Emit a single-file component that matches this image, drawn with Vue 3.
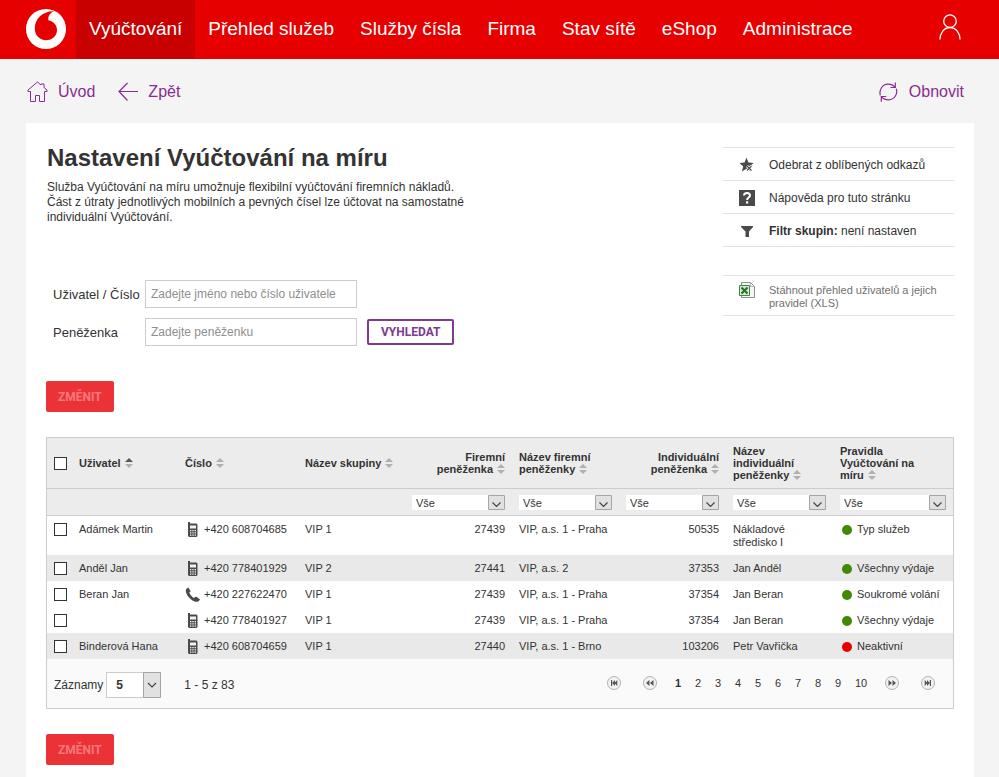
<script setup>
import { ref } from 'vue'

const nav = ['Vyúčtování', 'Přehled služeb', 'Služby čísla', 'Firma', 'Stav sítě', 'eShop', 'Administrace']

const columns = [
  { key: 'user', lines: ['Uživatel'], sorted: true },
  { key: 'number', lines: ['Číslo'] },
  { key: 'group', lines: ['Název skupiny'] },
  { key: 'company', lines: ['Firemní', 'peněženka'], right: true, filter: true },
  { key: 'companyName', lines: ['Název firemní', 'peněženky'], filter: true },
  { key: 'individual', lines: ['Individuální', 'peněženka'], right: true, filter: true },
  { key: 'individualName', lines: ['Název', 'individuální', 'peněženky'], filter: true },
  { key: 'rules', lines: ['Pravidla', 'Vyúčtování na', 'míru'], filter: true }
]

const rows = [
  { user: 'Adámek Martin', number: '+420 608704685', group: 'VIP 1', company: '27439', companyName: 'VIP, a.s. 1 - Praha', individual: '50535', individualName: 'Nákladové středisko I', rule: 'Typ služeb' },
  { user: 'Anděl Jan', number: '+420 778401929', group: 'VIP 2', company: '27441', companyName: 'VIP, a.s. 2', individual: '37353', individualName: 'Jan Anděl', rule: 'Všechny výdaje', shaded: true },
  { user: 'Beran Jan', number: '+420 227622470', landline: true, group: 'VIP 1', company: '27439', companyName: 'VIP, a.s. 1 - Praha', individual: '37354', individualName: 'Jan Beran', rule: 'Soukromé volání' },
  { user: '', number: '+420 778401927', group: 'VIP 1', company: '27439', companyName: 'VIP, a.s. 1 - Praha', individual: '37354', individualName: 'Jan Beran', rule: 'Všechny výdaje' },
  { user: 'Binderová Hana', number: '+420 608704659', group: 'VIP 1', company: '27440', companyName: 'VIP, a.s. 1 - Brno', individual: '103206', individualName: 'Petr Vavřička', rule: 'Neaktivní', inactive: true, shaded: true }
]

const page = ref(1)
const userQuery = ref('')
const walletQuery = ref('')
</script>

<template>
  <div class="page">
    <header class="topbar">
      <a href="#" class="logo" aria-label="Vodafone">
        <svg width="40" height="40" viewBox="0 0 40 40">
          <circle cx="20" cy="20" r="20" fill="#fff" />
          <path fill="#e60000" d="M28.300 2.300C23 1.900 17.300 4 13.700 7.600C10.500 10.800 8.800 15 8.800 19.500C8.800 26.200 13.600 31.200 20 31.200C26.400 31.200 31 26.700 31 21C31 15.700 27.600 12.500 22.300 11.200C22.100 6.800 24.300 3.600 28.300 2.300Z" />
        </svg>
      </a>
      <nav class="nav">
        <a v-for="(item, i) in nav" :key="item" href="#" :class="{ active: i === 0 }">{{ item }}</a>
      </nav>
      <a href="#" class="account" aria-label="Účet">
        <svg width="22" height="26" viewBox="0 0 22 26" fill="none" stroke="#fff" stroke-width="1.300">
          <circle cx="11" cy="7.200" r="6.300" />
          <path d="M.9 25.500C1.200 18.500 5.300 13.500 11 13.500S20.800 18.500 21.100 25.500" />
        </svg>
      </a>
    </header>

    <div class="toolbar">
      <a href="#" class="home">
        <svg width="21" height="22" viewBox="0 0 21 22" fill="none" stroke="currentColor" stroke-width="1">
          <path d="M3.500 10.500H1V9L10.500 1L14 4V3H17V6.500L20 9V10.500H17.500V20.500H12.500V14.500H8.500V20.500H3.500Z" />
        </svg>
        Úvod
      </a>
      <a href="#" class="back">
        <svg width="20" height="20" viewBox="0 0 20 20" fill="none" stroke="currentColor" stroke-width="1.200">
          <path d="M20 9.500H1M9.500 1L1 9.500L9.500 18.500" />
        </svg>
        Zpět
      </a>
      <a href="#" class="refresh">
        <svg width="20" height="20" viewBox="0 0 20 20" fill="none" stroke="currentColor" stroke-width="1.200">
          <path d="M1.300 13.300C-.2 8 3.400 2.200 9 2.200C12 2.200 14.500 3.500 15.800 5.200M16.300 .5V5.500H11.500M17.300 6.700C19 12 15.400 17.800 9.500 17.800C6.700 17.800 4.200 16.700 2.700 14.800M2.300 19.700V14.500H7.200" />
        </svg>
        Obnovit
      </a>
    </div>

    <main class="card">
      <div class="intro-area">
        <div class="intro">
          <h1>Nastavení Vyúčtování na míru</h1>
          <p>Služba Vyúčtování na míru umožnuje flexibilní vyúčtování firemních nákladů. Část z útraty jednotlivých mobilních a pevných čísel lze účtovat na samostatné individuální Vyúčtování.</p>
          <form class="search" @submit.prevent>
            <label for="user-query">Uživatel / Číslo</label>
            <input id="user-query" v-model="userQuery" type="text" placeholder="Zadejte jméno nebo číslo uživatele">
            <label for="wallet-query" class="second">Peněženka</label>
            <input id="wallet-query" v-model="walletQuery" type="text" placeholder="Zadejte peněženku">
            <button type="submit">VYHLEDAT</button>
          </form>
        </div>

        <aside class="side">
          <ul class="links">
            <li>
              <a href="#">
                <svg width="16" height="16" viewBox="0 0 16 16">
                  <path fill="#4a4a4a" d="M7.500 .8L9.500 5.500L14.500 5.900L10.800 9.500L12 14.600L7.500 11.800L2.900 14.600L4.200 9.500L.5 6L5.500 5.500Z" />
                  <path d="M8 9L12.500 13.500M12.500 9L8 13.500" stroke="#fff" stroke-width="2.600" />
                  <path d="M8 9L12.500 13.500M12.500 9L8 13.500" stroke="#4a4a4a" stroke-width="1.100" />
                </svg>
                <span>Odebrat z oblíbených odkazů</span>
              </a>
            </li>
            <li>
              <a href="#">
                <svg width="16" height="16" viewBox="0 0 16 16">
                  <path fill="#4a4a4a" d="M0 0H16V16H0Z" />
                  <path d="M5 5.500C5 3.500 6.300 2.900 8 2.900S11 3.800 11 5.400C11 7.600 8.100 7.500 8.100 10" fill="none" stroke="#fff" stroke-width="2" />
                  <path d="M7 11.300H9.200V13.500H7Z" fill="#fff" />
                </svg>
                <span>Nápověda pro tuto stránku</span>
              </a>
            </li>
            <li>
              <a href="#">
                <svg width="16" height="16" viewBox="0 0 16 16"><path fill="#4a4a4a" d="M2 3H14V4L10 8.500V14H6.500V8.500L2 4Z" /></svg>
                <span><b>Filtr skupin:</b> není nastaven</span>
              </a>
            </li>
          </ul>
          <a href="#" class="download">
            <svg width="16" height="16" viewBox="0 0 16 16">
              <path d="M2.500 .5H11.500L15.500 4.500V15.500H2.500Z" fill="#f7f7f7" stroke="#8a928a" />
              <path d="M11.500 .5V4.500H15.500" fill="none" stroke="#b4bbb4" />
              <path d="M.5 3.500H10.500V13.500H.5Z" fill="#d5e8d3" stroke="#438543" />
              <path d="M2.500 5.500L8.500 11.500M8.500 5.500L2.500 11.500" stroke="#24712a" stroke-width="2" />
            </svg>
            <span>Stáhnout přehled uživatelů a jejich pravidel (XLS)</span>
          </a>
        </aside>
      </div>

      <button type="button" class="change" disabled>ZMĚNIT</button>

      <section class="grid-box">
        <table>
          <colgroup>
            <col class="c-check">
            <col class="c-user">
            <col class="c-wide">
            <col class="c-std">
            <col class="c-std">
            <col class="c-std">
            <col class="c-std">
            <col class="c-std">
            <col class="c-wide">
          </colgroup>
          <thead>
            <tr class="heads">
              <th class="check"><input type="checkbox" aria-label="Vybrat vše"></th>
              <th v-for="c in columns" :key="c.key" :class="{ right: c.right }">
                <template v-for="(line, i) in c.lines" :key="line"><br v-if="i">{{ line }}</template>
                <svg class="sort" width="8" height="10" viewBox="0 0 8 10">
                  <path d="M4 0L8 4H0Z" :fill="c.sorted ? '#555' : '#b0b0b0'" />
                  <path d="M0 6H8L4 10Z" fill="#b0b0b0" />
                </svg>
              </th>
            </tr>
            <tr class="filters">
              <td></td>
              <td v-for="c in columns" :key="c.key">
                <div v-if="c.filter" class="picker">
                  <select :aria-label="c.lines.join(' ')"><option>Vše</option></select>
                  <svg width="17" height="15" viewBox="0 0 17 15" fill="none">
                    <path d="M.5 .5H16.500V14.500H.5Z" fill="#e1e1e1" stroke="#a5a5a5" />
                    <path d="M4.500 7.500L8.500 11.500L12.500 7.500" stroke="#444" stroke-width="1.200" />
                  </svg>
                </div>
              </td>
            </tr>
          </thead>
          <tbody>
            <tr v-for="r in rows" :key="r.number" :class="{ shaded: r.shaded }">
              <td class="check"><input type="checkbox" :aria-label="r.number"></td>
              <td>{{ r.user }}</td>
              <td>
                <div class="phone">
                  <svg v-if="r.landline" width="16" height="15" viewBox="0 0 16 15">
                    <path fill="#4a4a4a" d="M1.500 1.800L3.300 .5L5.700 4.200L4.300 5.500C4.800 7.700 6.800 9.800 9.100 10.900L10.900 9.600L15 12.200L13.700 14.200C12.600 15.200 10.600 14.900 8.500 13.900C4.900 12.200 1.800 8.500 1 5C.7 3.600 .8 2.500 1.500 1.800Z" />
                  </svg>
                  <svg v-else width="16" height="15" viewBox="0 0 16 15">
                    <path fill="#4a4a4a" d="M3 0H5V1.500H11.500L12.500 2.500V14L11.500 15H4L3 14Z" />
                    <path fill="#f2f2f2" d="M5 3.500H11V6.500H5ZM5 8H6.400V9.300H5ZM7.300 8H8.700V9.300H7.300ZM9.600 8H11V9.300H9.600ZM5 10.200H6.400V11.500H5ZM7.300 10.200H8.700V11.500H7.300ZM9.600 10.200H11V11.500H9.600ZM5 12.400H6.400V13.700H5ZM7.300 12.400H8.700V13.700H7.300ZM9.600 12.400H11V13.700H9.600Z" />
                  </svg>
                  {{ r.number }}
                </div>
              </td>
              <td>{{ r.group }}</td>
              <td class="right">{{ r.company }}</td>
              <td>{{ r.companyName }}</td>
              <td class="right">{{ r.individual }}</td>
              <td>{{ r.individualName }}</td>
              <td><div class="rule"><i :class="{ off: r.inactive }"></i>{{ r.rule }}</div></td>
            </tr>
          </tbody>
        </table>

        <div class="footer">
          <label for="page-size">Záznamy</label>
          <div class="picker size">
            <select id="page-size"><option>5</option></select>
            <svg width="18" height="26" viewBox="0 0 18 26" fill="none">
              <path d="M.5 .5H17.500V25.500H.5Z" fill="#e1e1e1" stroke="#a5a5a5" />
              <path d="M5 11L9 15L13 11" stroke="#444" stroke-width="1.200" />
            </svg>
          </div>
          <span class="range">1 - 5 z 83</span>
          <nav class="pager" aria-label="Stránkování">
            <button type="button" class="jump" aria-label="První">
              <svg width="14" height="14" viewBox="0 0 14 14">
                <circle cx="7" cy="7" r="6.500" fill="#f2f2f2" stroke="#b0b0b0" />
                <path fill="#555" d="M4 4H5.200V10H4ZM8 4V10L5.200 7ZM10.300 4V10L7.500 7Z" />
              </svg>
            </button>
            <button type="button" class="jump" aria-label="Předchozí">
              <svg width="14" height="14" viewBox="0 0 14 14">
                <circle cx="7" cy="7" r="6.500" fill="#f2f2f2" stroke="#b0b0b0" />
                <path fill="#555" d="M6.500 4V10L3 7ZM10.500 4V10L7 7Z" />
              </svg>
            </button>
            <button v-for="n in 10" :key="n" type="button" class="num" :class="{ current: n === page }" @click="page = n">{{ n }}</button>
            <button type="button" class="jump" aria-label="Další">
              <svg width="14" height="14" viewBox="0 0 14 14">
                <circle cx="7" cy="7" r="6.500" fill="#f2f2f2" stroke="#b0b0b0" />
                <path fill="#555" d="M3.500 4L7 7L3.500 10ZM7.500 4L11 7L7.500 10Z" />
              </svg>
            </button>
            <button type="button" class="jump" aria-label="Poslední">
              <svg width="14" height="14" viewBox="0 0 14 14">
                <circle cx="7" cy="7" r="6.500" fill="#f2f2f2" stroke="#b0b0b0" />
                <path fill="#555" d="M3.700 4L6.500 7L3.700 10ZM6 4L8.800 7L6 10ZM8.800 4H10V10H8.800Z" />
              </svg>
            </button>
          </nav>
        </div>
      </section>

      <button type="button" class="change" disabled>ZMĚNIT</button>
    </main>
  </div>
</template>

<style>
body {
  margin: 0;
  background: #f4f4f4;
}
</style>

<style scoped>
.page {
  display: flex;
  flex-direction: column;
  min-height: 100vh;
  font-family: "Liberation Sans", Arial, sans-serif;
  font-size: 12px;
  color: #333;
}
.page * {
  box-sizing: border-box;
}
a {
  color: inherit;
  text-decoration: none;
}
svg {
  display: block;
  flex: none;
}
button,
input,
select {
  font-family: inherit;
  color: inherit;
  margin: 0;
}

.topbar {
  display: flex;
  align-items: center;
  height: 59px;
  padding: 0 38px 0 26px;
  background: #e60000;
  color: #fff;
}
.logo {
  padding-bottom: 1px;
}
.nav {
  display: flex;
  align-self: stretch;
  margin-left: 10px;
  font-size: 19px;
}
.nav a {
  padding: 0 13px;
  line-height: 57px;
  white-space: nowrap;
}
.nav .active {
  background: #c80000;
}
.account {
  margin-left: auto;
  padding-bottom: 6px;
}

.toolbar {
  display: flex;
  align-items: center;
  height: 64px;
  padding: 1px 35px 0 27px;
  font-size: 16px;
  color: #8a2c92;
}
.toolbar a {
  display: flex;
  align-items: center;
  gap: 10px;
}
.back {
  margin-left: 23px;
}
.refresh {
  margin-left: auto;
}

.card {
  flex: 1;
  margin: 0 25px 0 26px;
  padding: 21px 20px 12px;
  background: #fff;
}
.intro-area {
  display: flex;
  justify-content: space-between;
  align-items: flex-start;
}
h1 {
  margin: 0 0 8px;
  font-size: 24px;
  line-height: 28px;
}
.intro {
  padding-left: 1px;
}
.intro p {
  max-width: 430px;
  margin: 0;
  line-height: 15px;
}
.search {
  display: grid;
  grid-template-columns: 92px 212px auto;
  row-gap: 10px;
  align-items: center;
  justify-content: start;
  margin: 55px 0 0 6px;
}
.search label {
  font-size: 13px;
}
.search .second {
  grid-column: 1;
}
.search input {
  width: 100%;
  height: 28px;
  padding: 0 5px;
  border: 1px solid #ccc;
  border-radius: 0;
  background: #fff;
  font-size: 12px;
}
.search input::placeholder {
  color: #8e8e8e;
  opacity: 1;
}
.search button {
  height: 26px;
  margin-left: 10px;
  padding: 0 12px;
  border: 2px solid #7d3a8e;
  border-radius: 2px;
  background: #fff;
  color: #7d3a8e;
  font: bold 12px Roboto, sans-serif;
}

.side {
  width: 231px;
  margin-top: 3px;
}
.links {
  margin: 0 0 28px;
  padding: 0;
  list-style: none;
  border-top: 1px solid #e2e2e2;
}
.links a {
  display: flex;
  align-items: center;
  gap: 14px;
  height: 33px;
  padding: 1px 0 0 16px;
  border-bottom: 1px solid #e2e2e2;
}
.download {
  display: flex;
  gap: 14px;
  padding: 6px 0 5px 16px;
  border: solid #e2e2e2;
  border-width: 1px 0;
  font-size: 11px;
  line-height: 13px;
  color: #707070;
}
.download span {
  padding-top: 2px;
}

.change {
  display: block;
  height: 31px;
  padding: 0 12px;
  border: 0;
  border-radius: 2px;
  background: #eb3237;
  color: #f4787b;
  font: bold 12px Roboto, sans-serif;
}
.intro-area + .change {
  margin-top: 35px;
}

.grid-box {
  margin: 25px 0;
  border: 1px solid #ccc;
  background: #fafafa;
}
table {
  width: 100%;
  table-layout: fixed;
  border-collapse: separate;
  border-spacing: 0;
  font-size: 11px;
  line-height: 13px;
}
.c-check {
  width: 25px;
}
.c-user {
  width: 106px;
}
.c-std {
  width: 107px;
}
.c-wide {
  width: 120px;
}
th,
td {
  padding: 7px 7px 6px;
  text-align: left;
  vertical-align: top;
}
.right {
  text-align: right;
}
.check {
  padding-right: 0;
}
.check input {
  display: block;
  appearance: none;
  width: 13px;
  height: 13px;
  border: 1px solid #333;
  background: #fff;
}
.heads th {
  height: 51px;
  padding-top: 0;
  padding-bottom: 0;
  border-bottom: 1px solid #ccc;
  background: #ececec;
  line-height: 12px;
  vertical-align: middle;
}
.sort {
  display: inline-block;
  margin-left: 4px;
  vertical-align: -1px;
}
.filters td {
  height: 27px;
  padding-top: 6px;
  padding-bottom: 5px;
  border-bottom: 1px solid #ccc;
  background: #ececec;
}
.picker {
  display: grid;
}
.picker > * {
  grid-area: 1 / 1;
}
.picker svg {
  justify-self: end;
  pointer-events: none;
}
.picker select {
  appearance: none;
  width: 100%;
  height: 15px;
  padding: 0 20px 0 4px;
  border: 0;
  border-radius: 0;
  background: #fff;
  font-size: 11px;
}
tbody td {
  background: #fff;
}
tbody .shaded td {
  background: #e9e9e9;
}
.phone,
.rule {
  display: flex;
  align-items: center;
  white-space: nowrap;
}
.phone {
  gap: 3px;
  height: 13px;
}
.rule {
  gap: 5px;
  padding-left: 2px;
}
.rule i {
  width: 10px;
  height: 10px;
  border-radius: 50%;
  background: #3f8a00;
}
.rule .off {
  background: #e60000;
}

.footer {
  display: flex;
  align-items: center;
  height: 49px;
  padding: 2px 7px 0;
}
.picker.size {
  width: 55px;
  margin-left: 3px;
}
.size select {
  height: 26px;
  padding-left: 9px;
  border: 1px solid #ccc;
  font-size: 12px;
  font-weight: bold;
}
.range {
  margin-left: 23px;
}
.pager {
  display: flex;
  align-items: center;
  margin-left: auto;
  padding-bottom: 4px;
}
.pager button {
  padding: 0;
  border: 0;
  background: none;
}
.pager .jump {
  width: 14px;
  margin: 0 11px;
}
.pager .num {
  width: 20px;
  font-size: 11px;
}
.pager .num:nth-child(12) {
  width: 26px;
}
.pager .current {
  font-weight: bold;
}
</style>
